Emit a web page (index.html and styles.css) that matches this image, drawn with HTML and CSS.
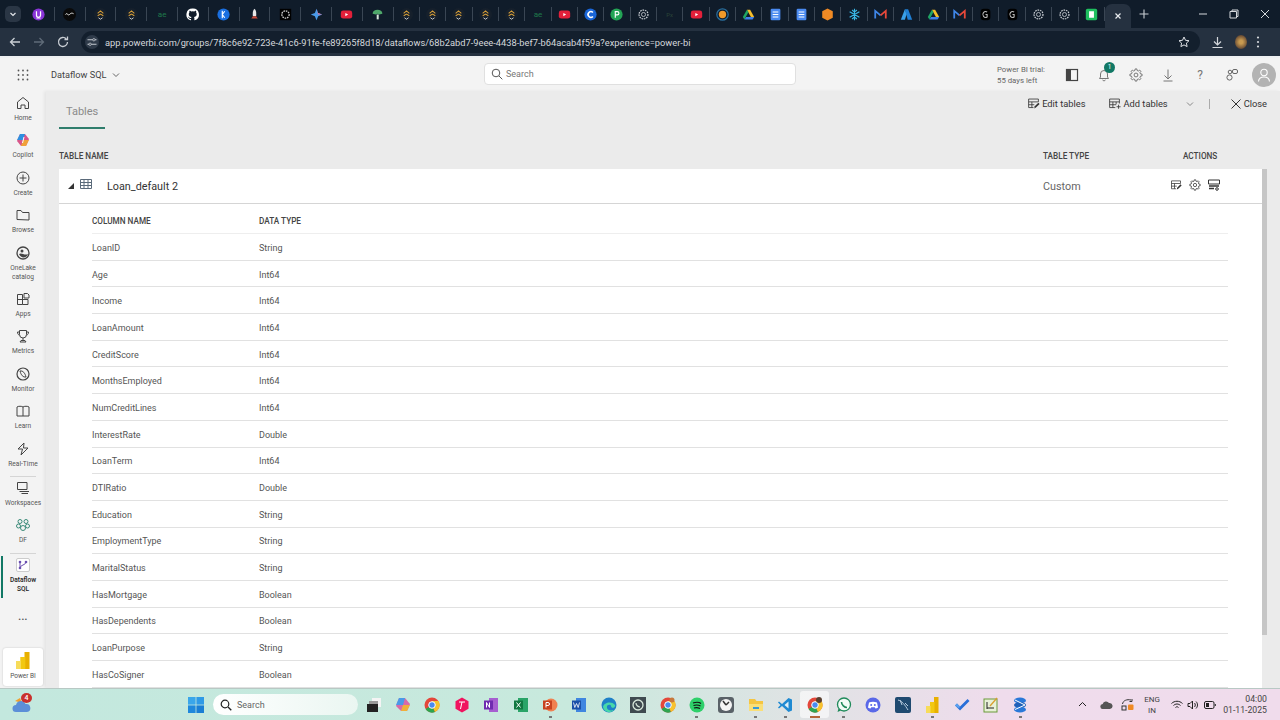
FILE: index.html
```html
<!DOCTYPE html>
<html>
<head>
<meta charset="utf-8">
<title>Dataflow SQL</title>
<link rel="stylesheet" href="styles.css">
</head>
<body>
<svg class="defs" width="0" height="0">
  <symbol id="gold" viewBox="0 0 16 16"><circle cx="8" cy="8" r="8" fill="#16202c"/><path d="M4.500 6.500L8 3.500l3.500 3M4.500 9.500L8 7.500l3.500 2" fill="none" stroke="#d89f38" stroke-width="1.300"/><path d="M5.500 12L8 13.800 10.500 12" fill="none" stroke="#d8d8d8" stroke-width="1.100"/></symbol>
  <symbol id="yt" viewBox="0 0 16 16"><rect x="1" y="3" width="14" height="10" rx="3" fill="#e3203a"/><path d="M6.500 6v4l3.500-2z" fill="#fff"/></symbol>
  <symbol id="gpt" viewBox="0 0 16 16"><circle cx="8" cy="8" r="5.500" fill="none" stroke="#c9ced4" stroke-width="1.500" stroke-dasharray="2 1"/><circle cx="8" cy="8" r="2.500" fill="none" stroke="#c9ced4"/></symbol>
  <symbol id="drive" viewBox="0 0 16 16"><path d="M6 2h4l5 9H11z" fill="#f5bd2a"/><path d="M6 2L1 11l2 3 5-9z" fill="#1fa463"/><path d="M3 14h10l2-3H5z" fill="#3f7fe8"/></symbol>
  <symbol id="doc" viewBox="0 0 16 16"><rect x="2" y="1" width="12" height="14" rx="1.500" fill="#4a8af0"/><path d="M4.500 5h7M4.500 8h7M4.500 11h7" stroke="#fff" stroke-width="1.300"/></symbol>
  <symbol id="gmail" viewBox="0 0 16 16"><path d="M1.500 13V3.500L8 9" fill="none" stroke="#3f86e8" stroke-width="2.200"/><path d="M14.500 13V3.500L8 9" fill="none" stroke="#e8483a" stroke-width="2.200"/></symbol>
  <symbol id="dark" viewBox="0 0 16 16"><rect x="2" y="1" width="12" height="14" rx="4" fill="#000"/><path d="M10 5a3.500 3.500 0 1 0 0 6V8H8" fill="none" stroke="#bbb" stroke-width="1.300"/></symbol>

  <symbol id="sliders" viewBox="0 0 16 16"><path d="M2 5h7M12 5h2M2 11h2M7 11h7" stroke="currentColor" stroke-width="1.300"/><circle cx="10.500" cy="5" r="1.600" fill="none" stroke="currentColor"/><circle cx="5.500" cy="11" r="1.600" fill="none" stroke="currentColor"/></symbol>
  <symbol id="gear" viewBox="0 0 16 16"><circle cx="8" cy="8" r="2.200" fill="none" stroke="currentColor"/><path d="M13.140 6.720L14.930 7.030V8.970L13.140 9.280L12.540 10.730L13.590 12.210L12.210 13.590L10.730 12.540L9.280 13.140L8.970 14.930H7.030L6.720 13.140L5.270 12.540L3.790 13.590L2.410 12.210L3.460 10.730L2.860 9.280L1.070 8.970V7.030L2.860 6.720L3.460 5.270L2.410 3.790L3.790 2.410L5.270 3.460L6.720 2.860L7.030 1.070H8.970L9.280 2.860L10.730 3.460L12.210 2.410L13.590 3.790L12.540 5.270z" fill="none" stroke="currentColor"/></symbol>
  <symbol id="edit" viewBox="0 0 16 16"><path d="M14 6V2.500H2V13h6M2 6h12M2 9.500h7M6 6v7" fill="none" stroke="currentColor"/><path d="M9 14l.5-2.500L14 7l1.500 1.500L11 13z" fill="currentColor"/></symbol>
  <symbol id="addt" viewBox="0 0 16 16"><path d="M14 8V2.500H2V13h7M2 6h12M2 9.500h8M6 6v7M10 6v3" fill="none" stroke="currentColor"/><path d="M13 9.500v5M10.500 12h5" stroke="currentColor"/></symbol>
</svg>

<div class="tabstrip">
  <span class="tab-menu"><svg width="10" height="10" viewBox="0 0 10 10"><path d="M2.500 4l2.500 2.500L7.500 4" fill="none" stroke="#e3e6ea" stroke-width="1.200"/></svg></span>
  <div class="favs">
    <span class="fav"><svg viewBox="0 0 16 16"><circle cx="8" cy="8" r="7.500" fill="#8a35d8"/><path d="M5.500 4v5a2.500 2.500 0 0 0 5 0V4" fill="none" stroke="#fff" stroke-width="1.500"/><path d="M5.500 12.500h5" stroke="#fff"/></svg></span>
    <span class="fav"><svg viewBox="0 0 16 16"><circle cx="8" cy="8" r="8" fill="#0a0a0a"/><path d="M3 8c2-3 3 2 5 0s3-2 5-1" fill="none" stroke="#eee" stroke-width="1.200"/></svg></span>
    <span class="fav"><svg><use href="#gold"/></svg></span>
    <span class="fav"><svg><use href="#gold"/></svg></span>
    <span class="fav ae">ae</span>
    <span class="fav"><svg viewBox="0 0 16 16"><path d="M8 .5a7.500 7.500 0 0 0-2.400 14.600c.4.100.5-.2.500-.4v-1.300c-2.100.5-2.500-1-2.500-1-.3-.9-.8-1.100-.8-1.100-.7-.5 0-.5 0-.5.800.100 1.200.8 1.200.8.700 1.200 1.800.8 2.300.6.100-.5.300-.8.500-1-1.700-.2-3.400-.8-3.400-3.700 0-.8.300-1.500.8-2-.1-.2-.3-1 .1-2 0 0 .6-.2 2.100.8a7 7 0 0 1 3.800 0c1.500-1 2.100-.8 2.100-.8.400 1 .2 1.800.1 2 .5.500.8 1.200.8 2 0 2.900-1.800 3.500-3.400 3.700.3.200.5.700.5 1.400v2.100c0 .2.100.5.500.4A7.500 7.500 0 0 0 8 .5z" fill="#fff"/></svg></span>
    <span class="fav"><svg viewBox="0 0 16 16"><circle cx="8" cy="8" r="7.500" fill="#1a6fe0"/><path d="M6.500 3.500v9M6.500 8l3-4M6.500 8l3 4" fill="none" stroke="#fff" stroke-width="1.400"/></svg></span>
    <span class="fav"><svg viewBox="0 0 16 16"><path d="M8 1c2 2 2.500 5 2 9H6C5.500 6 6 3 8 1z" fill="#e8e8e8"/><path d="M6 10l-2 3h8l-2-3z" fill="#c94a3a"/></svg></span>
    <span class="fav"><svg viewBox="0 0 16 16"><rect x="1" y="1" width="14" height="14" fill="#000"/><circle cx="8" cy="8" r="4.500" fill="none" stroke="#ccc" stroke-width="1.600" stroke-dasharray="2 1"/></svg></span>
    <span class="fav"><svg viewBox="0 0 16 16"><path d="M8 1l2 5 5 2-5 2-2 5-2-5-5-2 5-2z" fill="#4a9ae8"/><path d="M8 1l2 5 5 2-5 0z" fill="#e86a8a"/></svg></span>
    <span class="fav"><svg><use href="#yt"/></svg></span>
    <span class="fav"><svg viewBox="0 0 16 16"><path d="M2 7a6 5 0 0 1 12 0l-4 1-2-1-2 1z" fill="#4fa86a"/><path d="M7 8h2.500v6H7z" fill="#d9e8dc"/></svg></span>
    <span class="fav fav-s"><svg><use href="#gold"/></svg></span>
    <span class="fav fav-s"><svg><use href="#gold"/></svg></span>
    <span class="fav fav-s"><svg><use href="#gold"/></svg></span>
    <span class="fav fav-s"><svg><use href="#gold"/></svg></span>
    <span class="fav fav-s"><svg><use href="#gold"/></svg></span>
    <span class="fav fav-s ae">ae</span>
    <span class="fav fav-s"><svg><use href="#yt"/></svg></span>
    <span class="fav fav-s"><svg viewBox="0 0 16 16"><circle cx="8" cy="8" r="7.500" fill="#1a66d8"/><path d="M11 5.500a3.500 3.500 0 1 0 0 5" fill="none" stroke="#fff" stroke-width="2"/></svg></span>
    <span class="fav fav-s"><svg viewBox="0 0 16 16"><circle cx="8" cy="8" r="7.500" fill="#23a455"/><path d="M6.500 12V4.500h2.500a2 2 0 0 1 0 4H6.500" fill="none" stroke="#fff" stroke-width="1.400"/></svg></span>
    <span class="fav fav-s"><svg><use href="#gpt"/></svg></span>
    <span class="fav fav-s px">Px</span>
    <span class="fav fav-s"><svg><use href="#yt"/></svg></span>
    <span class="fav fav-s"><svg viewBox="0 0 16 16"><circle cx="8" cy="8" r="7" fill="none" stroke="#2a6f9e" stroke-width="1.500"/><circle cx="8" cy="8" r="4.500" fill="#f09a2a"/></svg></span>
    <span class="fav fav-s"><svg><use href="#drive"/></svg></span>
    <span class="fav fav-s"><svg><use href="#doc"/></svg></span>
    <span class="fav fav-s"><svg><use href="#doc"/></svg></span>
    <span class="fav fav-s"><svg viewBox="0 0 16 16"><path d="M8 .5l6.500 3.500v8L8 15.500 1.500 12V4z" fill="#f08a24"/></svg></span>
    <span class="fav fav-s"><svg viewBox="0 0 16 16"><path d="M8 1v14M2 4.500l12 7M14 4.500l-12 7M5 2.500L8 5l3-2.500M5 13.500L8 11l3 2.500" fill="none" stroke="#3ab8e8" stroke-width="1.400"/></svg></span>
    <span class="fav fav-s"><svg><use href="#gmail"/></svg></span>
    <span class="fav fav-s"><svg viewBox="0 0 16 16"><path d="M6 1.500h4L15 14.500H9.500z" fill="#1f7fd4"/><path d="M6 1.500L1 14.500h5L8 8z" fill="#3aa0e8"/></svg></span>
    <span class="fav fav-s"><svg><use href="#drive"/></svg></span>
    <span class="fav fav-s"><svg><use href="#gmail"/></svg></span>
    <span class="fav fav-s"><svg><use href="#dark"/></svg></span>
    <span class="fav fav-s"><svg><use href="#dark"/></svg></span>
    <span class="fav fav-s"><svg><use href="#gpt"/></svg></span>
    <span class="fav fav-s"><svg><use href="#gpt"/></svg></span>
    <span class="fav fav-s"><svg viewBox="0 0 16 16"><rect x="1" y="1" width="14" height="14" rx="2" fill="#1fbf5f"/><rect x="5" y="4" width="6" height="8" fill="#fff"/></svg></span>
  </div>
  <div class="active-tab"><svg width="10" height="10" viewBox="0 0 10 10"><path d="M2.500 2.500l5 5M7.500 2.500l-5 5" stroke="#e8ebef" stroke-width="1.200"/></svg></div>
  <svg class="new-tab" width="12" height="12" viewBox="0 0 12 12"><path d="M6 1.500v9M1.500 6h9" stroke="#c9ced4" stroke-width="1.100"/></svg>
  <div class="win-btns">
    <svg width="10" height="10" viewBox="0 0 10 10"><path d="M1 5h8" stroke="#d5d8dc"/></svg>
    <svg width="10" height="10" viewBox="0 0 10 10"><path d="M3 2.500V1h6v6.500H7.500M1 2.500h6.500V9H1z" fill="none" stroke="#d5d8dc"/></svg>
    <svg width="10" height="10" viewBox="0 0 10 10"><path d="M1 1l8 8M9 1L1 9" stroke="#d5d8dc"/></svg>
  </div>
</div>

<div class="toolbar">
  <svg class="nav" width="14" height="14" viewBox="0 0 14 14"><path d="M12 7H2.500M6.500 3L2.500 7l4 4" fill="none" stroke="#c9ced4" stroke-width="1.300"/></svg>
  <svg class="nav" width="14" height="14" viewBox="0 0 14 14"><path d="M2 7h9.500M7.500 3l4 4-4 4" fill="none" stroke="#5f6b78" stroke-width="1.300"/></svg>
  <svg class="nav" width="14" height="14" viewBox="0 0 14 14"><path d="M11.500 7a4.500 4.500 0 1 1-1.300-3.200M11.500 1.500v3h-3" fill="none" stroke="#c9ced4" stroke-width="1.300"/></svg>
  <div class="omnibox">
    <span class="site-btn"><svg width="12" height="12"><use href="#sliders"/></svg></span>
    <span class="url">app.powerbi.com/groups/7f8c6e92-723e-41c6-91fe-fe89265f8d18/dataflows/68b2abd7-9eee-4438-bef7-b64acab4f59a?experience=power-bi</span>
    <svg width="12" height="12" viewBox="0 0 12 12"><path d="M6 1l1.500 3.300 3.500.4-2.600 2.400.7 3.500L6 8.900l-3.100 1.700.7-3.500L1 4.700l3.500-.4z" fill="none" stroke="#dfe2e6"/></svg>
  </div>
  <svg class="tool-ic" width="13" height="13" viewBox="0 0 13 13"><path d="M6.500 1v7.500M3 5.500l3.500 3.500L10 5.500M1.500 11.500h10" fill="none" stroke="#d5d8dc" stroke-width="1.200"/></svg>
  <span class="profile"></span>
  <svg class="tool-ic more" width="4" height="14" viewBox="0 0 4 14"><circle cx="2" cy="2.500" r="1.100" fill="#d5d8dc"/><circle cx="2" cy="7" r="1.100" fill="#d5d8dc"/><circle cx="2" cy="11.500" r="1.100" fill="#d5d8dc"/></svg>
</div>

<div class="app">
  <header class="appbar">
    <svg class="waffle" width="12" height="12" viewBox="0 0 12 12" fill="#555"><circle cx="1.500" cy="1.500" r=".9"/><circle cx="6" cy="1.500" r=".9"/><circle cx="10.500" cy="1.500" r=".9"/><circle cx="1.500" cy="6" r=".9"/><circle cx="6" cy="6" r=".9"/><circle cx="10.500" cy="6" r=".9"/><circle cx="1.500" cy="10.500" r=".9"/><circle cx="6" cy="10.500" r=".9"/><circle cx="10.500" cy="10.500" r=".9"/></svg>
    <span class="ws-name">Dataflow SQL</span>
    <svg class="ws-chev" width="8" height="8" viewBox="0 0 8 8"><path d="M1 2.500l3 3 3-3" fill="none" stroke="#666"/></svg>
    <div class="searchbox">
      <svg width="12" height="12" viewBox="0 0 12 12"><circle cx="5" cy="5" r="3.800" fill="none" stroke="#555"/><path d="M8 8l3.300 3.300" stroke="#555"/></svg>
      <span>Search</span>
    </div>
    <div class="trial">Power BI trial:<br>55 days left</div>
    <svg class="bar-ic first" width="14" height="14" viewBox="0 0 14 14"><rect x="1.500" y="1.500" width="11" height="11" fill="none" stroke="#444" stroke-width="1.200"/><rect x="1.500" y="1.500" width="4.500" height="11" fill="#444"/></svg>
    <span class="bell">
      <svg width="14" height="14" viewBox="0 0 14 14"><path d="M2.500 10.500h9L10.500 9V6a3.500 3.500 0 0 0-7 0v3zM5.500 12c.5 1 2.500 1 3 0" fill="none" stroke="#777"/></svg>
      <b class="badge">1</b>
    </span>
    <svg class="bar-ic" width="14" height="14" color="#666"><use href="#gear"/></svg>
    <svg class="bar-ic" width="14" height="14" viewBox="0 0 14 14"><path d="M7 1.500v9M3.500 7.500L7 11l3.500-3.500M2.500 13h9" fill="none" stroke="#777"/></svg>
    <span class="bar-q">?</span>
    <svg class="bar-ic" width="14" height="14" viewBox="0 0 14 14"><circle cx="4.500" cy="9.500" r="2.600" fill="none" stroke="#666"/><rect x="7.500" y="1.500" width="5" height="4" rx="1.500" fill="none" stroke="#666"/><circle cx="5" cy="4" r="1.800" fill="none" stroke="#666"/></svg>
    <span class="avatar"><svg width="14" height="14" viewBox="0 0 14 14"><circle cx="7" cy="4.500" r="3.200" fill="none" stroke="#fff" stroke-width="1.100"/><path d="M1.500 13.500c.5-6 10.500-6 11 0" fill="none" stroke="#fff" stroke-width="1.100"/></svg></span>
  </header>

  <div class="main">
    <nav class="sidebar">
      <a class="nav-item"><svg width="14" height="14" viewBox="0 0 14 14"><path d="M1.500 6L7 1.500 12.500 6v6.500h-3.500V9H5v3.500H1.500z" fill="none" stroke="#444"/></svg><span>Home</span></a>
      <a class="nav-item"><svg width="14" height="14" viewBox="0 0 14 14"><path d="M4 1h5l4 5-3 7H5L1 8z" fill="#d8568a"/><path d="M4 1h5L7 7H1z" fill="#2f8fe0"/><path d="M7 7h6l-3 6H5z" fill="#f0a13a"/><path d="M6.500 10L8 4" stroke="#fff"/></svg><span>Copilot</span></a>
      <a class="nav-item"><svg width="14" height="14" viewBox="0 0 14 14"><circle cx="7" cy="7" r="6" fill="none" stroke="#444"/><path d="M7 3.500v7M3.500 7h7" stroke="#444"/></svg><span>Create</span></a>
      <a class="nav-item"><svg width="14" height="14" viewBox="0 0 14 14"><path d="M1 11.500V2.500h4l1.500 2H13v7.500z" fill="none" stroke="#444"/></svg><span>Browse</span></a>
      <a class="nav-item two"><svg width="14" height="14" viewBox="0 0 14 14"><circle cx="7" cy="7" r="6" fill="none" stroke="#444" stroke-width="1.300"/><path d="M3 8c3-2 5 2 9 0-1 4-7 5-9 0z" fill="#444"/><circle cx="6" cy="5" r="1.500" fill="#444"/></svg><span>OneLake<br>catalog</span></a>
      <a class="nav-item"><svg width="14" height="14" viewBox="0 0 14 14"><path d="M1.500 2.500h5v10h-5zM1.500 7.500h10.500v5H6.500M8 5V1.500h3.500L13 3v3H8z" fill="none" stroke="#444"/></svg><span>Apps</span></a>
      <a class="nav-item"><svg width="14" height="14" viewBox="0 0 14 14"><path d="M3.500 1.500h7v4a3.500 3.500 0 0 1-7 0zM3.500 3H1.500c0 2 1 3 2 3M10.500 3h2c0 2-1 3-2 3M7 9v2.500M4 13h6l-1-1.500H5z" fill="none" stroke="#444"/></svg><span>Metrics</span></a>
      <a class="nav-item"><svg width="14" height="14" viewBox="0 0 14 14"><circle cx="7" cy="7" r="6" fill="none" stroke="#444" stroke-width="1.200"/><path d="M4 4c3-.5 5 2 6 6-3 .5-5-2-6-6z" fill="none" stroke="#444"/></svg><span>Monitor</span></a>
      <a class="nav-item"><svg width="14" height="14" viewBox="0 0 14 14"><path d="M7 3v9M7 3c-1-1-5-1-6 0v9h6M7 3c1-1 5-1 6 0v9H7" fill="none" stroke="#444"/></svg><span>Learn</span></a>
      <a class="nav-item"><svg width="14" height="14" viewBox="0 0 14 14"><path d="M8 1L2 7h4.500L5 13l7-7H7.500z" fill="none" stroke="#444"/></svg><span>Real-Time</span></a>
      <hr class="nav-rule">
      <a class="nav-item"><svg width="14" height="14" viewBox="0 0 14 14"><path d="M1.500 1.500h9.500v7H1.500zM3.500 10.500H13M5.500 12.500H12" fill="none" stroke="#444"/></svg><span>Workspaces</span></a>
      <a class="nav-item"><svg width="14" height="14" viewBox="0 0 14 14" fill="none" stroke="#3a8a78"><circle cx="4" cy="3.500" r="2"/><circle cx="10" cy="3.500" r="2"/><circle cx="2.500" cy="8" r="2"/><circle cx="11.500" cy="8" r="2"/><circle cx="7" cy="10" r="2.500"/></svg><span>DF</span></a>
      <hr class="nav-rule">
      <a class="nav-item two current"><span class="tile"><svg width="10" height="10" viewBox="0 0 10 10"><circle cx="2" cy="2" r="1.300" fill="#6a4fb0"/><circle cx="8" cy="2" r="1.300" fill="#6a4fb0"/><circle cx="2" cy="8" r="1.300" fill="#6a4fb0"/><path d="M2 2v6M8 2C8 5 2 5 2 8" fill="none" stroke="#6a4fb0"/></svg></span><span>Dataflow<br>SQL</span></a>
      <div class="nav-more">•••</div>
      <a class="pbi-tile"><svg width="14" height="17" viewBox="0 0 14 17"><rect x="8.500" y="0" width="5" height="17" fill="#e8b000"/><rect x="4.300" y="5" width="5" height="12" fill="#f2c811"/><rect x="0" y="9" width="5" height="8" fill="#f7dc5a"/></svg><span>Power BI</span></a>
    </nav>

    <section class="content">
      <div class="content-top">
        <div class="tab-title">Tables</div>
        <div class="actions-bar">
          <span class="act"><svg width="13" height="13"><use href="#edit"/></svg>Edit tables</span>
          <span class="act add"><svg width="13" height="13"><use href="#addt"/></svg>Add tables</span>
          <svg class="act-chev" width="8" height="8" viewBox="0 0 8 8"><path d="M1 2.500l3 3 3-3" fill="none" stroke="#888"/></svg>
          <span class="act-sep"></span>
          <span class="act close"><svg width="10" height="10" viewBox="0 0 10 10"><path d="M.5.500l9 9M9.500.500l-9 9" stroke="#333"/></svg>Close</span>
        </div>
      </div>
      <div class="tables-head">
        <span class="th-name">TABLE NAME</span>
        <span class="th-type">TABLE TYPE</span>
        <span class="th-actions">ACTIONS</span>
      </div>
      <div class="panel">
        <div class="table-card">
          <div class="table-row">
            <svg class="caret" width="6" height="6" viewBox="0 0 6 6"><path d="M6 0v6H0z" fill="#333"/></svg>
            <svg class="grid-ic" width="12" height="12" viewBox="0 0 12 12"><path d="M.5 1.500h11v9H.5zM.5 4.500h11M.5 7.500h11M4 1.500v9M8 1.500v9" fill="none" stroke="#5a6a7a"/></svg>
            <span class="table-title">Loan_default 2</span>
            <span class="table-type">Custom</span>
            <span class="table-acts">
              <svg width="12" height="12" color="#333"><use href="#edit"/></svg>
              <svg width="12" height="12" color="#333"><use href="#gear"/></svg>
              <svg width="12" height="12" viewBox="0 0 12 12"><path d="M.5 1h11v4H.5z" fill="none" stroke="#333"/><path d="M1 7h10M1 9.500h5" stroke="#333" stroke-width="1.300"/><circle cx="9" cy="10" r="1.300" fill="none" stroke="#333"/></svg>
            </span>
          </div>
          <div class="columns">
            <div class="col-row col-head"><span class="c-name">COLUMN NAME</span><span>DATA TYPE</span></div>
            <div class="col-row"><span class="c-name">LoanID</span><span>String</span></div>
            <div class="col-row"><span class="c-name">Age</span><span>Int64</span></div>
            <div class="col-row"><span class="c-name">Income</span><span>Int64</span></div>
            <div class="col-row"><span class="c-name">LoanAmount</span><span>Int64</span></div>
            <div class="col-row"><span class="c-name">CreditScore</span><span>Int64</span></div>
            <div class="col-row"><span class="c-name">MonthsEmployed</span><span>Int64</span></div>
            <div class="col-row"><span class="c-name">NumCreditLines</span><span>Int64</span></div>
            <div class="col-row"><span class="c-name">InterestRate</span><span>Double</span></div>
            <div class="col-row"><span class="c-name">LoanTerm</span><span>Int64</span></div>
            <div class="col-row"><span class="c-name">DTIRatio</span><span>Double</span></div>
            <div class="col-row"><span class="c-name">Education</span><span>String</span></div>
            <div class="col-row"><span class="c-name">EmploymentType</span><span>String</span></div>
            <div class="col-row"><span class="c-name">MaritalStatus</span><span>String</span></div>
            <div class="col-row"><span class="c-name">HasMortgage</span><span>Boolean</span></div>
            <div class="col-row"><span class="c-name">HasDependents</span><span>Boolean</span></div>
            <div class="col-row"><span class="c-name">LoanPurpose</span><span>String</span></div>
            <div class="col-row"><span class="c-name">HasCoSigner</span><span>Boolean</span></div>
          </div>
        </div>
        <div class="scroll-thumb"></div>
      </div>
    </section>
  </div>
</div>

<footer class="taskbar">
  <svg class="weather" width="20" height="18" viewBox="0 0 20 18"><path d="M3 5l5-3 2 5z" fill="#f0a030"/><path d="M4 16a3.500 3.500 0 0 1 0-7 5 5 0 0 1 9.500-1 4 4 0 0 1 1.500 8z" fill="#5b8fd8"/></svg>
  <b class="weather-badge">4</b>
  <div class="task-center">
    <svg class="start" width="16" height="16" viewBox="0 0 16 16"><rect width="7.600" height="7.600" fill="#3aa6ea"/><rect x="8.400" width="7.600" height="7.600" fill="#2f9ae6"/><rect y="8.400" width="7.600" height="7.600" fill="#1f88dc"/><rect x="8.400" y="8.400" width="7.600" height="7.600" fill="#1a7ed4"/></svg>
    <div class="task-search">
      <svg width="12" height="12" viewBox="0 0 12 12"><circle cx="5" cy="5" r="3.800" fill="none" stroke="#222" stroke-width="1.200"/><path d="M8 8l3.300 3.300" stroke="#222" stroke-width="1.300"/></svg>
      <span>Search</span>
    </div>
    <span class="app-ic"><svg viewBox="0 0 16 16"><rect x="6" y="1" width="9" height="9" fill="#f4f4f4"/><rect x="3" y="4" width="9" height="5" fill="#999"/><rect x="1" y="7" width="11" height="8" fill="#222"/></svg></span>
    <span class="app-ic"><svg viewBox="0 0 16 16"><path d="M4 1h6l5 6-3 7H6L1 9z" fill="#d86aa8"/><path d="M4 1h6L8 8H1z" fill="#4a9ae8"/><path d="M8 8h7l-3 6H6z" fill="#f0b03a"/></svg></span>
    <span class="app-ic"><svg viewBox="0 0 16 16"><circle cx="8" cy="8" r="7.500" fill="#e4473a"/><path d="M8 8L1.500 12A7.500 7.500 0 0 0 11 15z" fill="#2fa44f"/><path d="M8 8l3 7A7.500 7.500 0 0 0 14.500 4H8z" fill="#f7c32e"/><circle cx="8" cy="8" r="3.300" fill="#4a8af0" stroke="#fff"/></svg></span>
    <span class="app-ic"><svg viewBox="0 0 16 16"><path d="M8 .5l6.500 3.700v7.600L8 15.500l-6.500-3.700V4.200z" fill="#f0145f"/><path d="M5 5h6M8 5l-1.500 7" stroke="#fff"/></svg></span>
    <span class="app-ic"><svg viewBox="0 0 16 16"><rect x="6" y="1" width="9" height="14" fill="#a65fd0"/><rect x="1" y="3.500" width="9" height="9" fill="#6f2bb0"/><path d="M3.500 10.500v-5l3 5v-5" fill="none" stroke="#fff"/></svg></span>
    <span class="app-ic"><svg viewBox="0 0 16 16"><rect x="5" y="1" width="10" height="14" fill="#2aa468"/><rect x="1" y="3.500" width="9" height="9" fill="#107840"/><path d="M3.500 5.500l4 5M7.500 5.500l-4 5" stroke="#fff"/></svg></span>
    <span class="app-ic run"><svg viewBox="0 0 16 16"><circle cx="9" cy="8" r="6.500" fill="#f08050"/><rect x="1" y="3.500" width="9" height="9" fill="#c8421f"/><path d="M4 10.500v-5h2a1.500 1.500 0 0 1 0 3H4" fill="none" stroke="#fff"/></svg></span>
    <span class="app-ic"><svg viewBox="0 0 16 16"><rect x="5" y="1" width="10" height="14" fill="#3f86e0"/><rect x="1" y="3.500" width="9" height="9" fill="#1a50a8"/><path d="M2.500 5.500l1.300 5 1.700-4 1.700 4 1.300-5" fill="none" stroke="#fff" stroke-width=".8"/></svg></span>
    <span class="app-ic"><svg viewBox="0 0 16 16"><circle cx="8" cy="8" r="7.500" fill="#1f80c8"/><path d="M2 10c1-5 9-6 12-2 1 3-4 4-4 1 0-2-5-2-4 2 .5 2 3 3 7 2-4 4-10 2-11-3z" fill="#48d8a8"/></svg></span>
    <span class="app-ic"><svg viewBox="0 0 16 16"><rect width="16" height="16" fill="#3f4a50"/><circle cx="8" cy="8" r="5" fill="none" stroke="#d8e8dc" stroke-width="1.300"/><path d="M6 6c0 2 2 4 4 4" fill="none" stroke="#d8e8dc" stroke-width="1.200"/></svg></span>
    <span class="app-ic"><svg viewBox="0 0 16 16"><circle cx="8" cy="8" r="7.500" fill="#e4473a"/><path d="M8 8L1.500 12A7.500 7.500 0 0 0 11 15z" fill="#2fa44f"/><path d="M8 8l3 7A7.500 7.500 0 0 0 14.500 4H8z" fill="#f7c32e"/><circle cx="8" cy="8" r="3.300" fill="#4a8af0" stroke="#fff"/><circle cx="12" cy="3" r="2.500" fill="#c8783a"/></svg></span>
    <span class="app-ic run"><svg viewBox="0 0 16 16"><circle cx="8" cy="8" r="7.500" fill="#2ed06a"/><path d="M4 6c3-1 6-1 8 .5M4.500 8.500c2.500-.8 5-.6 7 .5M5 11c2-.5 4-.4 6 .5" fill="none" stroke="#111" stroke-width="1.200"/></svg></span>
    <span class="app-ic"><svg viewBox="0 0 16 16"><rect width="16" height="16" rx="3" fill="#5a6268"/><circle cx="8" cy="8" r="6" fill="#f4f4f4"/><path d="M8 8L5 4M8 8l3-3" stroke="#333" stroke-width="1.500"/></svg></span>
    <span class="app-ic run"><svg viewBox="0 0 16 16"><path d="M1 4V2h6l1.500 2H15v10H1z" fill="#f5c542"/><path d="M1 7h14v7H1z" fill="#fadf78"/><path d="M5 10h6v2H5z" fill="#3a9ad8"/></svg></span>
    <span class="app-ic run"><svg viewBox="0 0 16 16"><path d="M11.500 1L15 2.500v11L11.500 15 5 9l-3 2.500L1 10.500 3.500 8 1 5.500 2 4.500 5 7z" fill="#1f8ad2"/><path d="M11.500 4.500L7.500 8l4 3.500z" fill="#dff0f8"/></svg></span>
    <span class="app-ic current"><svg viewBox="0 0 16 16"><circle cx="8" cy="8" r="7.500" fill="#e4473a"/><path d="M8 8L1.500 12A7.500 7.500 0 0 0 11 15z" fill="#2fa44f"/><path d="M8 8l3 7A7.500 7.500 0 0 0 14.500 4H8z" fill="#f7c32e"/><circle cx="8" cy="8" r="3.300" fill="#4a8af0" stroke="#fff"/><circle cx="12" cy="3" r="3" fill="#5a4030"/></svg></span>
    <span class="app-ic run"><svg viewBox="0 0 16 16"><circle cx="8" cy="7.500" r="6.500" fill="#f2fbf6" stroke="#1f8a5a" stroke-width="1.300"/><path d="M1.500 15l1-3.500 2.500 2z" fill="#1f8a5a"/><path d="M5.500 5c0 3 3 5.500 5.500 5.500" fill="none" stroke="#1f8a5a" stroke-width="1.600"/></svg></span>
    <span class="app-ic"><svg viewBox="0 0 16 16"><circle cx="8" cy="8" r="7.500" fill="#5a68e8"/><path d="M4 5.500c2.500-1 5.500-1 8 0l1 5c-1 .7-2 1-2.500 1l-.8-1.300h-3.400l-.8 1.300C5 11.500 4 11.200 3 10.500z" fill="#fff"/><circle cx="6.200" cy="8" r="1" fill="#5a68e8"/><circle cx="9.800" cy="8" r="1" fill="#5a68e8"/></svg></span>
    <span class="app-ic"><svg viewBox="0 0 16 16"><rect width="16" height="16" rx="2" fill="#1f4a70"/><path d="M3 3c4 1 7 5 10 10M5 3l2 5M10 6l3 3" fill="none" stroke="#b8cde0"/></svg></span>
    <span class="app-ic run"><svg viewBox="0 0 16 16"><rect x="10" y="0" width="4.500" height="16" fill="#e8b000"/><rect x="6" y="5" width="4.500" height="11" fill="#f2c811"/><rect x="2" y="9" width="4.500" height="7" fill="#f7dc5a"/></svg></span>
    <span class="app-ic"><svg viewBox="0 0 16 16"><path d="M1 8.500l2-2 3 3L13.500 2 15.500 4 6 13.500z" fill="#2a6fd8"/><path d="M1 8.500l2-2 3 3-1 2z" fill="#5aa0ee"/></svg></span>
    <span class="app-ic"><svg viewBox="0 0 16 16"><rect x="1" y="2" width="13" height="13" fill="#e8f0d8" stroke="#6a9a3a"/><path d="M4 5v7M4 11h7" stroke="#222"/><path d="M7 9l7-8" stroke="#d8a030" stroke-width="1.300"/></svg></span>
    <span class="app-ic run"><svg viewBox="0 0 16 16"><ellipse cx="8" cy="3.500" rx="6" ry="3" fill="#2a78d8"/><ellipse cx="8" cy="8" rx="6" ry="3" fill="#1f60b8"/><ellipse cx="8" cy="12.500" rx="6" ry="3" fill="#2a78d8"/><path d="M3 3l10 5-10 4.500" fill="none" stroke="#fff"/></svg></span>
  </div>
  <div class="tray">
    <svg width="9" height="9" viewBox="0 0 9 9"><path d="M1 6l3.500-3.500L8 6" fill="none" stroke="#222"/></svg>
    <svg class="tray-cloud" width="13" height="9" viewBox="0 0 13 9"><path d="M3 9a2.500 2.500 0 0 1-.3-5A3.500 3.500 0 0 1 9 3a3 3 0 0 1 1 6z" fill="#555"/></svg>
    <svg class="tray-sync" width="13" height="13" viewBox="0 0 13 13"><path d="M1.500 6C2 2.500 6 1 10 2M11 1v2.500H8.500" fill="none" stroke="#333"/><rect x="1" y="8" width="4" height="4" fill="none" stroke="#333"/><rect x="7" y="6.500" width="5.500" height="5.500" rx="1" fill="#f08a24"/></svg>
    <div class="lang">ENG<br>IN</div>
    <svg class="tray-wifi" width="12" height="10" viewBox="0 0 12 10"><path d="M.5 3.500c3-3 8-3 11 0M2.500 5.500c2-2 5-2 7 0M4.500 7.500c1-1 2-1 3 0" fill="none" stroke="#222"/></svg>
    <svg class="tray-vol" width="11" height="10" viewBox="0 0 11 10"><path d="M1 3.500h2L5.500 1v8L3 6.500H1zM7.500 3c1 1 1 3 0 4M9 1.500c2 2 2 5 0 7" fill="none" stroke="#222"/></svg>
    <svg class="tray-bat" width="12" height="8" viewBox="0 0 12 8"><rect x=".5" y=".5" width="9.500" height="7" rx="1.500" fill="none" stroke="#222"/><rect x="2" y="2" width="3" height="4" fill="#222"/><path d="M11.300 3v2" stroke="#222"/></svg>
    <div class="clock">04:00<br>01-11-2025</div>
  </div>
</footer>
</body>
</html>
```

FILE: styles.css
```css
* {
  box-sizing: border-box;
}

html, body {
  margin: 0;
  height: 720px;
  overflow: hidden;
}

body {
  display: flex;
  flex-direction: column;
  font-family: "Roboto", "Noto Sans", sans-serif;
  font-size: 9px;
  color: #333;
}

.defs {
  position: absolute;
}

/* browser chrome */
.tabstrip {
  height: 28px;
  background: #101c2a;
  display: flex;
  align-items: center;
  flex: none;
}

.tab-menu {
  width: 16px;
  height: 16px;
  margin-left: 5px;
  border-radius: 5px;
  background: #2a3645;
  display: flex;
  align-items: center;
  justify-content: center;
}

.favs {
  display: flex;
  margin-left: 3px;
  flex: none;
}

.fav {
  width: 30.800px;
  height: 14px;
  display: flex;
  align-items: center;
  justify-content: center;
  border-right: 1px solid #3a4654;
  font-size: 8px;
}

.fav svg {
  width: 13px;
  height: 13px;
}

.fav-s {
  width: 26.350px;
}

.fav.ae {
  color: #1f7a4a;
}

.fav.px {
  color: #2a4438;
  font-size: 6px;
}

.active-tab {
  width: 26px;
  height: 24px;
  margin-top: 4px;
  background: #253140;
  border-radius: 7px 7px 0 0;
  display: flex;
  align-items: center;
  justify-content: center;
}

.new-tab {
  margin-left: 7px;
}

.win-btns {
  margin-left: auto;
  width: 82px;
  padding-right: 10px;
  display: flex;
  justify-content: space-between;
}

.toolbar {
  height: 30px;
  flex: none;
  background: #253140;
  border-bottom: 2px solid #eef0f2;
  display: flex;
  align-items: center;
  padding-left: 8px;
}

.nav {
  margin-right: 10px;
}

.omnibox {
  width: 1119px;
  height: 22px;
  margin-left: 1px;
  border-radius: 11px;
  background: #131f2d;
  display: flex;
  align-items: center;
  padding: 0 10px 0 4px;
  color: #c9ced4;
}

.site-btn {
  width: 14px;
  height: 14px;
  border-radius: 50%;
  background: #2f3b4a;
  display: flex;
  align-items: center;
  justify-content: center;
}

.url {
  margin-left: 6px;
  flex: 1;
  font-size: 9.300px;
  color: #d5d8dc;
  white-space: nowrap;
}

.tool-ic {
  margin-left: 11px;
}

.tool-ic.more {
  margin-left: 9px;
}

.profile {
  width: 12px;
  height: 14px;
  margin-left: 11px;
  border-radius: 50%;
  background: radial-gradient(circle, #c89a50 20%, #5a4030 80%);
}

/* power bi frame */
.app {
  flex: 1;
  min-height: 0;
  display: flex;
  flex-direction: column;
  background: #f3f3f3;
}

.appbar {
  height: 33px;
  flex: none;
  display: flex;
  align-items: center;
  padding-left: 17px;
  position: relative;
}

.ws-name {
  margin-left: 22px;
  font-size: 9.200px;
  color: #444;
}

.ws-chev {
  margin-left: 6px;
}

.searchbox {
  position: absolute;
  left: 484px;
  top: 5px;
  width: 312px;
  height: 22px;
  background: #fff;
  border: 1px solid #e0e0e0;
  border-radius: 4px;
  display: flex;
  align-items: center;
  padding-left: 6px;
  gap: 3px;
  color: #777;
  font-size: 9px;
}

.trial {
  margin-left: auto;
  width: 59px;
  font-size: 7.800px;
  line-height: 11px;
  color: #666;
}

.bar-ic {
  margin-left: 18px;
}

.bar-ic.first {
  margin-left: 9px;
}

.bell {
  position: relative;
  margin-left: 18px;
  height: 14px;
}

.badge {
  position: absolute;
  left: 7px;
  top: -6px;
  width: 11px;
  height: 11px;
  border-radius: 50%;
  background: #117865;
  color: #fff;
  font-size: 6.500px;
  font-weight: 400;
  text-align: center;
  line-height: 11px;
}

.bar-q {
  margin-left: 20px;
  font-size: 12px;
  color: #777;
  width: 10px;
  text-align: center;
}

.bar-q + .bar-ic {
  margin-left: 20px;
}

.avatar {
  width: 24px;
  height: 24px;
  margin: 0 4px 0 13px;
  border-radius: 50%;
  background: #b3b3b3;
  display: flex;
  align-items: center;
  justify-content: center;
}

.main {
  flex: 1;
  min-height: 0;
  display: flex;
}

/* left nav */
.sidebar {
  width: 46px;
  flex: none;
  padding-top: 5px;
  display: flex;
  flex-direction: column;
  align-items: center;
  position: relative;
}

.nav-item {
  width: 46px;
  height: 37.450px;
  flex: none;
  display: flex;
  flex-direction: column;
  align-items: center;
  color: #555;
  font-size: 6.600px;
  line-height: 9px;
  text-align: center;
}

.nav-item svg {
  flex: none;
  margin-bottom: 4px;
}

.nav-item.two {
  height: 46px;
}

.nav-rule {
  width: 26px;
  margin: -3px 0 4px;
  border: 0;
  border-top: 1px solid #d5d5d5;
}

.nav-item.current {
  color: #222;
  font-weight: 500;
  position: relative;
  height: 50px;
}

.nav-item.current::before {
  content: "";
  position: absolute;
  left: 1px;
  top: -2px;
  width: 2px;
  height: 42px;
  background: #117865;
}

.tile {
  width: 14px;
  height: 14px;
  margin-bottom: 4px;
  background: #fff;
  border: 1px solid #ccc;
  border-radius: 2px;
  display: flex;
  align-items: center;
  justify-content: center;
}

.tile svg {
  margin: 0;
}

.nav-more {
  margin-top: 7px;
  color: #555;
  font-size: 8px;
  letter-spacing: 0.5px;
}

.pbi-tile {
  position: absolute;
  left: 3px;
  top: 557px;
  width: 40px;
  height: 38px;
  background: #fff;
  border-radius: 3px;
  box-shadow: 0 0 2px rgba(0, 0, 0, .2);
  display: flex;
  flex-direction: column;
  align-items: center;
  padding-top: 4px;
  font-size: 6.500px;
  color: #555;
  gap: 3px;
}

/* content */
.content {
  flex: 1;
  min-width: 0;
  background: #ebebeb;
  box-shadow: -2px 0 3px rgba(0, 0, 0, .06);
  padding-left: 13px;
  display: flex;
  flex-direction: column;
}

.content-top {
  height: 38px;
  flex: none;
  display: flex;
  justify-content: space-between;
}

.tab-title {
  width: 46px;
  height: 38px;
  padding: 14px 0 0 7px;
  font-size: 11px;
  color: #8a8a8a;
  border-bottom: 2px solid #2f7d6c;
}

.actions-bar {
  height: 25px;
  padding-right: 13px;
  display: flex;
  align-items: center;
  color: #333;
  font-size: 9.300px;
}

.act {
  display: flex;
  align-items: center;
  gap: 2px;
}

.act.add {
  margin-left: 23px;
}

.act-chev {
  margin-left: 18px;
}

.act-sep {
  width: 1px;
  height: 10px;
  margin: 0 21px 0 15px;
  background: #aaa;
}

.close {
  gap: 3px;
}

.tables-head {
  height: 40px;
  flex: none;
  padding-top: 22px;
  display: flex;
  font-size: 8.200px;
  color: #444;
  font-weight: 500;
}

.th-name {
  width: 984px;
}

.th-type {
  width: 140px;
}

.panel {
  flex: 1;
  min-height: 0;
  display: flex;
  align-items: flex-start;
  overflow: hidden;
}

.table-card {
  width: 1203px;
  flex: none;
  background: #fff;
  height: 100%;
  overflow: hidden;
}

.table-row {
  height: 35px;
  display: flex;
  align-items: center;
  border-bottom: 1px solid #d5d5d5;
  padding-left: 9px;
}

.grid-ic {
  margin-left: 6px;
  margin-top: -5px;
}

.table-title {
  margin-left: 15px;
  width: 936px;
  font-size: 10.800px;
  color: #333;
}

.table-type {
  width: 127px;
  font-size: 10.800px;
  color: #666;
}

.table-acts {
  display: flex;
  gap: 7px;
  margin-top: -3px;
}

.columns {
  margin: 0 34px 0 33px;
}

.col-row {
  height: 26.700px;
  padding-top: 2px;
  display: flex;
  align-items: center;
  border-bottom: 1px solid #e1e1e1;
  font-size: 9px;
  color: #555;
}

.col-head {
  height: 30px;
  padding-top: 4px;
  font-size: 8.200px;
  font-weight: 500;
  color: #444;
  border-bottom-color: #eee;
}

.c-name {
  width: 167px;
}

.scroll-thumb {
  width: 5px;
  height: 466px;
  background: #c6c6c6;
  flex: none;
}

/* windows taskbar */
.taskbar {
  height: 32px;
  flex: none;
  position: relative;
  display: flex;
  align-items: center;
  border-top: 1px solid #b8c8c4;
  background: linear-gradient(90deg, #c3e8de 0%, #c8e9dd 45%, #dfe3e4 62%, #efdcec 78%, #f0dcec 100%);
}

.weather {
  margin-left: 12px;
}

.weather-badge {
  position: absolute;
  left: 21px;
  top: 4px;
  width: 11px;
  height: 10px;
  border-radius: 50%;
  background: #c9302c;
  color: #fff;
  font-size: 7px;
  font-weight: 500;
  text-align: center;
  line-height: 10px;
}

.task-center {
  margin-left: 156px;
  display: flex;
  align-items: center;
  width: 864px;
}

.start {
  margin-left: 0;
  flex: none;
}

.task-search {
  width: 145px;
  height: 21px;
  margin: 0 1px 0 9px;
  border-radius: 11px;
  background: linear-gradient(90deg, #fff, #eaf6f1);
  display: flex;
  align-items: center;
  gap: 5px;
  padding-left: 7px;
  font-size: 9px;
  color: #666;
  flex: none;
}

.app-ic {
  width: 29.400px;
  height: 27px;
  flex: none;
  display: flex;
  align-items: center;
  justify-content: center;
  position: relative;
}

.app-ic svg {
  width: 16px;
  height: 16px;
}

.app-ic.run::after,
.app-ic.current::after {
  content: "";
  position: absolute;
  bottom: 0;
  width: 3px;
  height: 2px;
  background: #777;
}

.app-ic.current {
  background: rgba(255, 255, 255, .6);
  border-radius: 3px;
}

.app-ic.current::after {
  width: 10px;
  background: #b5653a;
}

.tray {
  flex: 1;
  display: flex;
  align-items: center;
  padding-left: 26px;
  color: #444;
  font-size: 8px;
}

.tray-cloud {
  margin-left: 13px;
}

.tray-sync {
  margin-left: 8px;
}

.lang {
  margin-left: 8px;
  text-align: center;
  line-height: 11px;
  width: 20px;
}

.tray-wifi {
  margin-left: 9px;
}

.tray-vol {
  margin-left: 4px;
}

.tray-bat {
  margin-left: 6px;
}

.clock {
  margin-left: auto;
  margin-right: 13px;
  text-align: right;
  line-height: 11px;
  font-size: 8.700px;
}
```
